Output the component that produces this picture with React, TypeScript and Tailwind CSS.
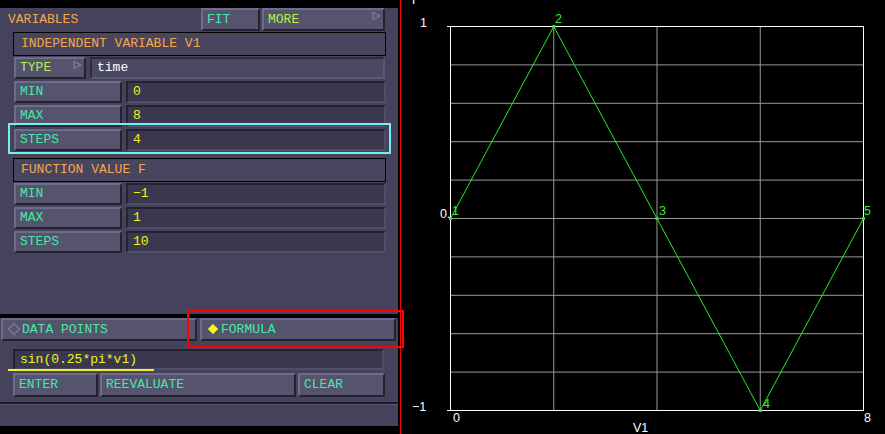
import type { ReactNode } from "react"

const mono = "font-['Liberation_Mono',monospace] text-[13px] leading-none"

function Btn({
  children,
  className = "",
  color = "text-[#44eaa4]",
}: {
  children: ReactNode
  className?: string
  color?: string
}) {
  return (
    <div
      className={`relative flex items-center border-2 border-t-[#6f6d8d] border-l-[#6f6d8d] border-b-[#24222e] border-r-[#24222e] bg-[#55536d] pb-[1px] pl-[4px] ${color} ${className}`}
    >
      {children}
    </div>
  )
}

function Field({ children, className = "" }: { children: ReactNode; className?: string }) {
  return (
    <div
      className={`flex items-center border-2 border-t-[#25232f] border-l-[#25232f] border-b-[#4f4d68] border-r-[#4f4d68] bg-[#3a384f] pb-[1px] pl-[5px] text-[#f2f21e] ${className}`}
    >
      {children}
    </div>
  )
}

function Arrow() {
  return (
    <svg width="9" height="8" viewBox="0 0 9 8" className="absolute right-[2px] top-[2px]">
      <path d="M1 0.5 L8 4 L1 7.5 Z" fill="none" stroke="#8a88a4" strokeWidth="1" />
    </svg>
  )
}

function Header({ title, className = "" }: { title: string; className?: string }) {
  return (
    <div
      className={`ml-[13px] flex h-[24px] w-[373px] items-center border border-black bg-[#48465f] pb-[1px] pl-[7px] text-[#f5a54a] ${className}`}
    >
      {title}
    </div>
  )
}

function Row({ label, value, className = "" }: { label: string; value: string; className?: string }) {
  return (
    <div className={`ml-[14px] flex h-[22px] w-[372px] gap-[4px] ${className}`}>
      <Btn className="w-[108px]">{label}</Btn>
      <Field className="flex-1">{value}</Field>
    </div>
  )
}

function Plot() {
  const x0 = 450
  const x1 = 863
  const y0 = 26
  const y1 = 410
  const vx = [0, 1, 2, 3, 4].map((i) => x0 + ((x1 - x0) * i) / 4)
  const hy = Array.from({ length: 11 }, (_, i) => y0 + ((y1 - y0) * i) / 10)
  const pts: [number, number, string, number, number][] = [
    [x0, 218, "1", 452, 215],
    [vx[1], y0, "2", 555, 23],
    [vx[2], 218, "3", 659, 215],
    [vx[3], y1, "4", 763, 408],
    [x1, 218, "5", 864, 215],
  ]
  return (
    <svg width="484" height="434" viewBox="401 0 484 434" className="block">
      <rect x="401" y="0" width="484" height="434" fill="#000" />
      {hy.slice(1, -1).map((y) => (
        <line key={y} x1={x0} x2={x1} y1={y + 0.5} y2={y + 0.5} stroke="#9a9a9a" />
      ))}
      {vx.slice(1, -1).map((x) => (
        <line key={x} x1={x + 0.5} x2={x + 0.5} y1={y0} y2={y1} stroke="#9a9a9a" />
      ))}
      <rect x={x0 + 0.5} y={y0 + 0.5} width={x1 - x0} height={y1 - y0} fill="none" stroke="#fff" />
      <line x1={447} x2={x0} y1={y0 + 0.5} y2={y0 + 0.5} stroke="#fff" />
      <line x1={447} x2={x0} y1={y1 + 0.5} y2={y1 + 0.5} stroke="#fff" />
      <polyline
        points={pts.map((p) => `${p[0] + 0.5},${p[1] + 0.5}`).join(" ")}
        fill="none"
        stroke="#22ee22"
        strokeWidth="1"
      />
      {pts.map((p) => (
        <g key={p[2]}>
          <rect x={p[0] - 1} y={p[1] - 1} width="3" height="3" fill="#22ee22" />
          <text x={p[3]} y={p[4]} fill="#33ee33" fontSize="12.5" fontFamily="'Liberation Sans', sans-serif">
            {p[2]}
          </text>
        </g>
      ))}
      <g fill="#fff" fontSize="12.5" fontFamily="'Liberation Sans', sans-serif">
        <text x="412" y="4">F</text>
        <text x="420" y="27">1</text>
        <text x="440" y="218">0.</text>
        <text x="412" y="411">−1</text>
        <text x="453" y="422">0</text>
        <text x="864" y="422">8</text>
        <text x="633" y="432">V1</text>
      </g>
    </svg>
  )
}

export default function App() {
  return (
    <div className={`relative flex h-[434px] w-[885px] overflow-hidden bg-black ${mono}`}>
      <div className="flex w-[398px] flex-col">
        <div className="h-[8px] bg-black" />
        <div className="flex flex-1 flex-col bg-[#45435c]">
          <div className="flex h-[23px] items-center">
            <span className="w-[201px] pb-[1px] pl-[8px] text-[#f5a54a]">VARIABLES</span>
            <Btn className="h-full w-[59px]">FIT</Btn>
            <Btn className="ml-[2px] h-full w-[123px]" color="text-[#b4f046]">
              MORE
              <Arrow />
            </Btn>
          </div>

          <Header title="INDEPENDENT VARIABLE V1" className="mt-[1px]" />
          <div className="ml-[14px] mt-[1px] flex h-[22px] w-[371px] gap-[4px]">
            <Btn className="w-[72px]" color="text-[#b4f046]">
              TYPE
              <Arrow />
            </Btn>
            <div className="flex flex-1 items-center border-2 border-t-[#2e2c3c] border-l-[#2e2c3c] border-b-[#5a5874] border-r-[#5a5874] bg-[#4a4862] pb-[1px] pl-[5px] text-white">
              time
            </div>
          </div>
          <Row label="MIN" value="0" className="mt-[2px]" />
          <Row label="MAX" value="8" className="mt-[2px]" />
          <Row label="STEPS" value="4" className="mt-[2px]" />

          <Header title="FUNCTION VALUE F" className="mt-[7px]" />
          <Row label="MIN" value="−1" className="mt-[1px]" />
          <Row label="MAX" value="1" className="mt-[2px]" />
          <Row label="STEPS" value="10" className="mt-[2px]" />

          <div className="flex-1" />
          <div className="h-[4px] bg-black" />
          <div className="flex h-[23px] gap-[3px] pl-[1px] pr-[2px]">
            <Btn className="w-[196px] pl-[2px]">
              <svg width="14" height="14" viewBox="0 0 14 14" className="mr-[1px]">
                <path d="M7 1.5 L12.5 7 L7 12.5 L1.5 7 Z" fill="none" stroke="#7a7890" strokeWidth="1.5" />
              </svg>
              DATA POINTS
            </Btn>
            <Btn className="flex-1 pl-[3px]">
              <svg width="14" height="14" viewBox="0 0 14 14" className="mr-[1px]">
                <path d="M7 2 L12 7 L7 12 L2 7 Z" fill="#f4f41e" stroke="#c8c814" strokeWidth="0.8" />
              </svg>
              FORMULA
            </Btn>
          </div>
          <Field className="ml-[13px] mt-[8px] h-[21px] w-[371px]">sin(0.25*pi*v1)</Field>
          <div className="ml-[13px] mt-[3px] flex h-[24px] w-[372px] gap-[2px]">
            <Btn className="w-[85px]">ENTER</Btn>
            <Btn className="flex-1">REEVALUATE</Btn>
            <Btn className="w-[87px]">CLEAR</Btn>
          </div>
          <div className="mt-[5px] h-[2px] bg-[#1c1a26]" />
          <div className="h-[22px] border-t border-t-[#56546e] bg-[#45435c]" />
        </div>
        <div className="h-[8px] bg-black" />
      </div>
      <div className="w-[2px] bg-black" />
      <div className="w-[1px] bg-[#ff0000]" />
      <Plot />

      <div className="pointer-events-none absolute left-[8px] top-[123px] h-[31px] w-[383px] border-2 border-[#6ff0f2]" />
      <div className="pointer-events-none absolute left-[187px] top-[310px] h-[38px] w-[217px] border-2 border-[#ff0000]" />
      <div className="pointer-events-none absolute left-[8px] top-[369px] h-[2px] w-[146px] bg-[#f4f41e]" />
    </div>
  )
}
